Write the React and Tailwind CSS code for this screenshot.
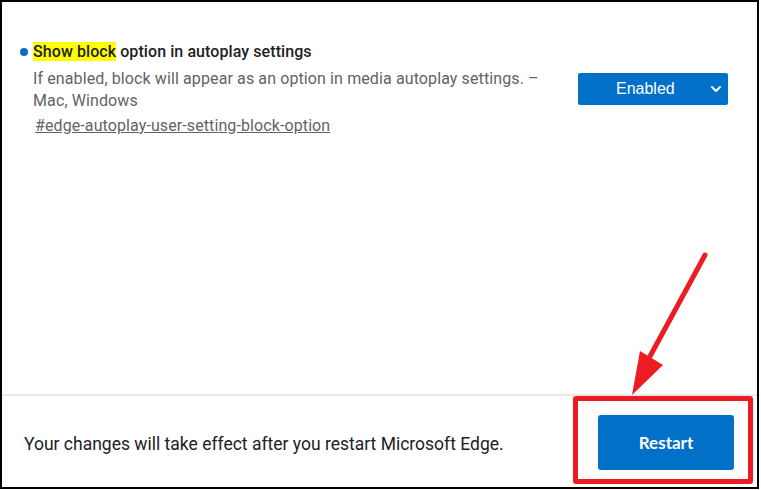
import { ChevronDown } from "lucide-react";

const App = () => {
  return (
    <div className="relative w-[761px] h-[490px] bg-white overflow-hidden">
      <div className="w-[759px] h-[489px] border-2 border-black flex flex-col font-['Roboto',sans-serif]">
        {/* flag list */}
        <div className="flex-1 pt-[39px] pl-[18px] pr-[29px]">
          <div className="flex justify-between">
            <div className="flex gap-[5px]">
              <span className="mt-[7px] w-[8px] h-[8px] rounded-full bg-[#0a6fc2] shrink-0" />
              <div className="w-[520px]">
                <h2 className="text-[16px] leading-[21px] font-medium tracking-[0.08px] text-[#202124]">
                  <span className="bg-[#ffff00]">Show block</span> option in autoplay settings
                </h2>
                <p className="mt-[6px] text-[16px] leading-[22px] tracking-[0.11px] text-[#5f6368]">
                  If enabled, block will appear as an option in media autoplay settings. – Mac, Windows
                </p>
                <a
                  href="#edge-autoplay-user-setting-block-option"
                  className="mt-[4px] ml-[2px] inline-block text-[16px] leading-[20px] tracking-[0.1px] text-[#5f6368] underline"
                >
                  #edge-autoplay-user-setting-block-option
                </a>
              </div>
            </div>
            <button
              type="button"
              className="mt-[32px] w-[150px] h-[32px] rounded-[2px] bg-[#0070c9] text-white flex items-center pl-[38px] pr-[4px] font-['Liberation_Sans',Arial,sans-serif] text-[16px]"
            >
              <span className="flex-1 text-left">Enabled</span>
              <ChevronDown size={16} strokeWidth={3} />
            </button>
          </div>
        </div>

        {/* restart footer */}
        <div className="h-[2px] bg-[#e8e8e8]" />
        <div className="h-[91px] flex items-center justify-between pl-[22px] pr-[23px]">
          <p className="text-[17.5px] text-[#202124] mt-[5px]">
            Your changes will take effect after you restart Microsoft Edge.
          </p>
          <button
            type="button"
            className="mt-[2px] w-[136px] h-[55px] rounded-[3px] bg-[#0070c9] text-white font-['Lato',sans-serif] font-bold text-[17px]"
          >
            Restart
          </button>
        </div>
      </div>

      {/* annotation */}
      <div className="absolute left-[573px] top-[396px] w-[180px] h-[88px] border-[5px] border-[#ed1c24] rounded-[3px]" />
      <svg className="absolute left-0 top-0" width="761" height="490" viewBox="0 0 761 490">
        <line x1="705" y1="255" x2="648" y2="360" stroke="#ed1c24" strokeWidth="5" strokeLinecap="round" />
        <polygon points="632,395 640,351 663,365" fill="#ed1c24" />
      </svg>
    </div>
  );
};

export default App;
